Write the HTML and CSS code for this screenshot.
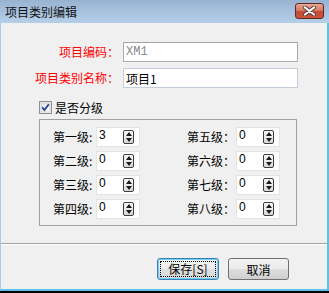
FILE: index.html
```html
<!DOCTYPE html>
<html lang="zh-CN">
<head>
    <meta charset="UTF-8">
    <title>项目类别编辑</title>
    <link rel="stylesheet" href="styles.css">
</head>
<body>
    <div class="window">
        <div class="titlebar">
            <span class="title">项目类别编辑</span>
            <button class="close-btn" aria-label="关闭">
                <svg width="15" height="10" viewBox="0 0 15 10">
                    <path d="M3 1.5 L12 8.5 M12 1.5 L3 8.5" stroke="#5a3a36" stroke-width="4" stroke-linecap="round"/>
                    <path d="M3 1.5 L12 8.5 M12 1.5 L3 8.5" stroke="#ffffff" stroke-width="2.2" stroke-linecap="round"/>
                </svg>
            </button>
        </div>

        <div class="client">
            <div class="fields">
                <label class="field-label">项目编码：</label>
                <input class="text-input code-input" type="text" value="XM1" disabled>
                <label class="field-label">项目类别名称：</label>
                <input class="text-input" type="text" value="项目1">
            </div>

            <div class="check-row">
                <span class="checkbox">
                    <svg width="13" height="13" viewBox="0 0 13 13">
                        <defs>
                            <linearGradient id="cb" x1="0" y1="0" x2="1" y2="1">
                                <stop offset="0" stop-color="#dfe4ea"/>
                                <stop offset="1" stop-color="#ffffff"/>
                            </linearGradient>
                        </defs>
                        <rect x="0.5" y="0.5" width="12" height="12" fill="#f4f4f4" stroke="#8e8f8f"/>
                        <rect x="2" y="2" width="9" height="9" fill="url(#cb)" stroke="#b8c0c8" stroke-width="0.6"/>
                        <path d="M3.2 6.3 L5.4 9 L9.8 3.3" fill="none" stroke="#2a3f8f" stroke-width="1.8"/>
                    </svg>
                </span>
                <span>是否分级</span>
            </div>

            <div class="group">
                <span class="lvl-label">第一级:</span>
                <div class="spin"><span>3</span><i class="spin-btn"></i></div>
                <span></span>
                <span class="lvl-label">第五级：</span>
                <div class="spin"><span>0</span><i class="spin-btn"></i></div>

                <span class="lvl-label">第二级:</span>
                <div class="spin"><span>0</span><i class="spin-btn"></i></div>
                <span></span>
                <span class="lvl-label">第六级：</span>
                <div class="spin"><span>0</span><i class="spin-btn"></i></div>

                <span class="lvl-label">第三级:</span>
                <div class="spin"><span>0</span><i class="spin-btn"></i></div>
                <span></span>
                <span class="lvl-label">第七级：</span>
                <div class="spin"><span>0</span><i class="spin-btn"></i></div>

                <span class="lvl-label">第四级:</span>
                <div class="spin"><span>0</span><i class="spin-btn"></i></div>
                <span></span>
                <span class="lvl-label">第八级：</span>
                <div class="spin"><span>0</span><i class="spin-btn"></i></div>
            </div>

            <div class="separator"></div>

            <div class="buttons">
                <button class="btn btn-default"><span class="focus">保存[S]</span></button>
                <button class="btn">取消</button>
            </div>
        </div>
    </div>
</body>
</html>
```

FILE: styles.css
```css
body {
    margin: 0;
    background-color: #000;
    font-family: "Noto Sans CJK SC", "Liberation Sans", sans-serif;
    font-size: 12px;
    color: #000;
}

.window {
    width: 329px;
    height: 291px;
    display: flex;
    flex-direction: column;
}

.titlebar {
    height: 23px;
    flex-shrink: 0;
    display: flex;
    align-items: center;
    justify-content: space-between;
    padding: 0 5px 0 5px;
    background: linear-gradient(#98b3d1, #b6cfe9);
}

.title {
    font-size: 12px;
    line-height: 14px;
    color: #111;
}

.close-btn {
    width: 29px;
    height: 16px;
    margin-top: -1px;
    padding: 0;
    border: 1px solid #5e2a22;
    border-radius: 3px;
    background: linear-gradient(#e7a795 0%, #d77a65 45%, #c34a32 55%, #c9553c 100%);
    display: flex;
    align-items: center;
    justify-content: center;
}

.client {
    flex: 1;
    background-color: #f0f0f0;
    border-left: 1px solid #a9c8ea;
    border-right: 2px solid #5ec0e6;
    border-bottom: 2px solid #5ec0e6;
    display: flex;
    flex-direction: column;
}

/* top fields */
.fields {
    display: grid;
    grid-template-columns: 122px 175px;
    grid-auto-rows: 20px;
    row-gap: 6px;
    margin-top: 19px;
}

.field-label {
    color: #ff0000;
    text-align: right;
    padding-right: 4px;
    line-height: 20px;
}

.text-input {
    box-sizing: border-box;
    height: 20px;
    width: 175px;
    margin: 0;
    padding: 0 2px;
    border: 1px solid #c5cfd9;
    background: #fff;
    font-family: "Noto Sans CJK SC", sans-serif;
    font-size: 12px;
    color: #000;
    outline: none;
}

.code-input {
    border: 1px solid #abadb3;
    border-top-color: #a3a3a3;
    font-family: "Liberation Mono", monospace;
    color: #8a8a8a;
}

.check-row {
    display: flex;
    align-items: center;
    gap: 3px;
    margin: 13px 0 5px 38px;
    height: 13px;
}

.checkbox {
    width: 13px;
    height: 13px;
    display: block;
}

.checkbox svg {
    display: block;
}

/* levels group */
.group {
    box-sizing: border-box;
    width: 258px;
    height: 107px;
    margin-left: 38px;
    border: 1px solid #a0a0a0;
    padding: 7px 0 0 13px;
    display: grid;
    grid-template-columns: 43px 44px 47px 49px 44px;
    grid-auto-rows: 20px;
    row-gap: 4px;
}

.lvl-label {
    line-height: 20px;
    white-space: nowrap;
}

.spin {
    box-sizing: border-box;
    height: 20px;
    background: #fff;
    border: 1px solid #e3e3e3;
    display: flex;
    align-items: flex-start;
    justify-content: space-between;
    padding: 0 5px 0 2px;
    font-family: "Liberation Sans", sans-serif;
    font-size: 12px;
    line-height: 14px;
}

.spin-btn {
    width: 11px;
    height: 14px;
    margin-top: 2px;
    box-sizing: border-box;
    border: 1px solid #3c3c3c;
    border-radius: 2px;
    background: linear-gradient(#fafafa, #d8d8d8);
    position: relative;
}

.spin-btn::before,
.spin-btn::after {
    content: "";
    position: absolute;
    left: 1.5px;
    width: 0;
    height: 0;
    border-left: 3.5px solid transparent;
    border-right: 3.5px solid transparent;
}

.spin-btn::before {
    top: 1px;
    border-bottom: 4px solid #1a1a1a;
}

.spin-btn::after {
    bottom: 1px;
    border-top: 4px solid #1a1a1a;
}

.separator {
    height: 1px;
    margin-top: 17px;
    background: #a0a0a0;
    border-bottom: 1px solid #ffffff;
}

.buttons {
    display: flex;
    justify-content: flex-end;
    gap: 9px;
    margin-top: 13px;
    padding-right: 38px;
}

.btn {
    box-sizing: border-box;
    width: 61px;
    height: 22px;
    padding: 0;
    border: 1px solid #707070;
    border-radius: 3px;
    background: linear-gradient(#f2f2f2 0%, #ebebeb 48%, #dddddd 52%, #cfcfcf 100%);
    font-family: "Noto Sans CJK SC", sans-serif;
    font-size: 12px;
    color: #000;
}

.btn-default {
    width: 62px;
    border: 1px solid #3c7fb1;
    box-shadow: inset 0 0 0 1px #6fd0f5;
    background: linear-gradient(#f4f4f4 0%, #ececec 48%, #e0e0e0 52%, #d6d6d6 100%);
}

.focus {
    display: block;
    margin: 2px;
    height: 14px;
    line-height: 14px;
    border: 1px dotted #000;
}
```
